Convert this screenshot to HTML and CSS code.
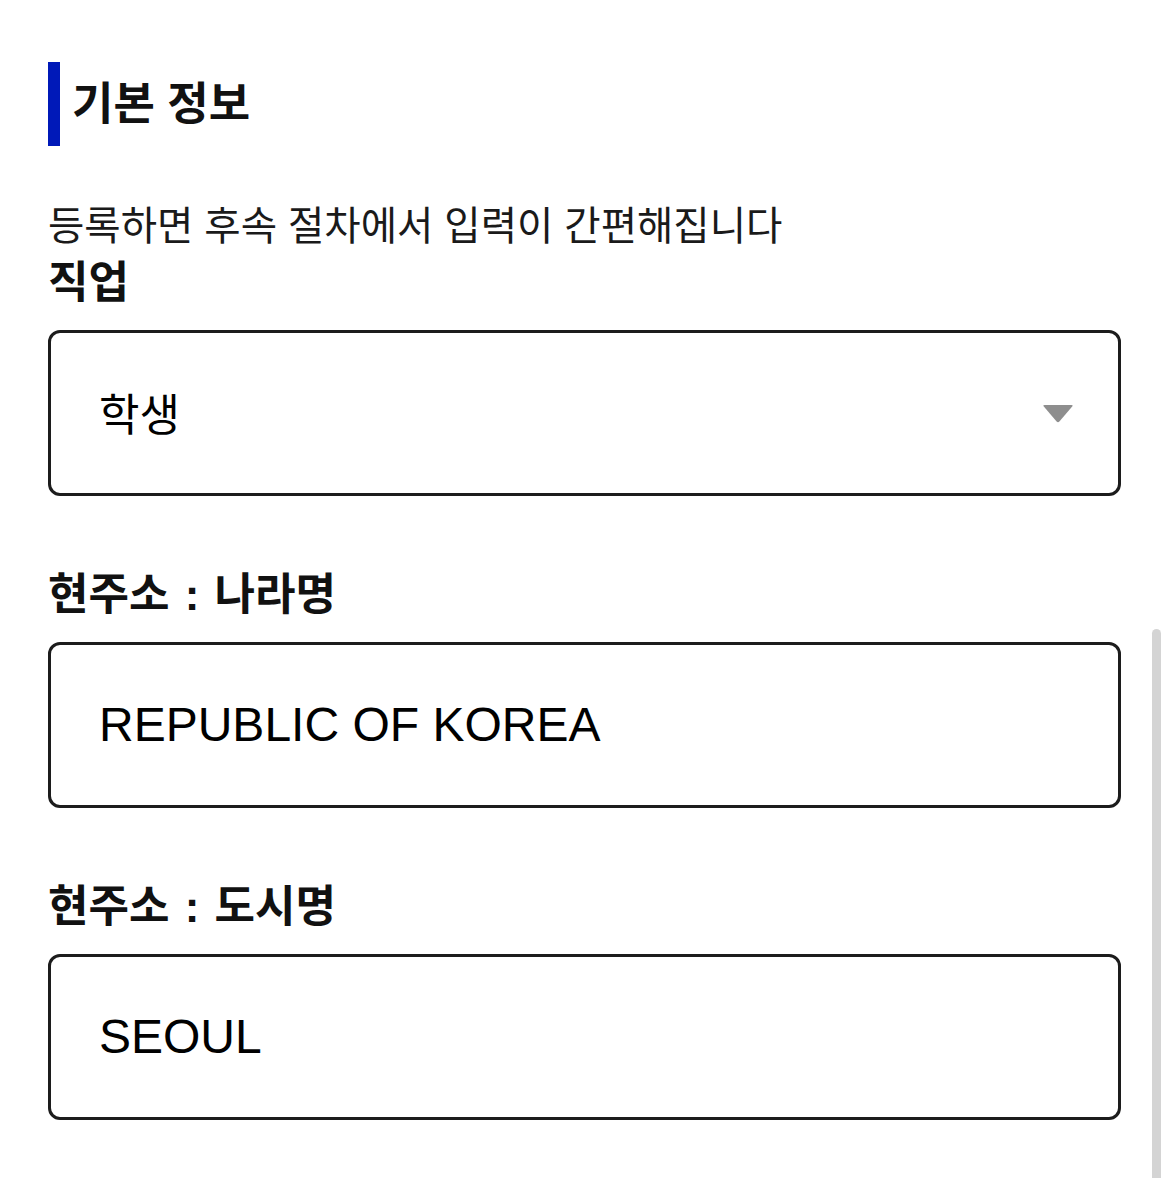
FILE: index.html
```html
<!DOCTYPE html>
<html lang="ko">
<head>
<meta charset="utf-8">
<title>기본 정보</title>
<link rel="stylesheet" href="styles.css">
</head>
<body>
<main class="page">
  <h2 class="section-title">기본 정보</h2>
  <p class="desc">등록하면 후속 절차에서 입력이 간편해집니다</p>
  <div class="field">
    <div class="label">직업</div>
    <div class="box select">
      <span class="value value-ko">학생</span>
      <svg class="caret" width="32" height="19" viewBox="0 0 32 19" aria-hidden="true">
        <path d="M2.5 1 L29.5 1 Q31.5 1 30.2 2.6 L17.4 17.4 Q16 19 14.6 17.4 L1.8 2.6 Q0.5 1 2.5 1 Z" fill="#8e8e8e"/>
      </svg>
    </div>
  </div>
  <div class="field">
    <div class="label">현주소 : 나라명</div>
    <div class="box"><span class="value">REPUBLIC OF KOREA</span></div>
  </div>
  <div class="field">
    <div class="label">현주소 : 도시명</div>
    <div class="box"><span class="value">SEOUL</span></div>
  </div>
</main>
<div class="scroll-thumb"></div>
</body>
</html>
```
FILE: styles.css
```css
html, body {
  margin: 0;
  padding: 0;
  background: #ffffff;
}
body {
  font-family: "Liberation Sans", "Noto Sans CJK KR", sans-serif;
  color: #111111;
  overflow: hidden;
  height: 1178px;
}
.page {
  padding: 62px 49px 0 48px;
  display: flex;
  flex-direction: column;
}
.section-title {
  margin: 0;
  height: 84px;
  line-height: 86px;
  border-left: 12px solid #0019b8;
  padding-left: 12px;
  font-size: 45px;
  font-weight: 700;
  color: #111111;
}
.desc {
  margin: 53px 0 0 0;
  font-size: 39.5px;
  line-height: 54px;
  font-weight: 400;
  color: #1a1a1a;
}
.field {
  display: flex;
  flex-direction: column;
  margin-top: 72px;
}
.desc + .field {
  margin-top: 3px;
}
.label {
  font-size: 44px;
  font-weight: 700;
  line-height: 54px;
  margin-bottom: 20px;
  word-spacing: 3px;
  color: #111111;
}
.box {
  box-sizing: border-box;
  height: 166px;
  border: 3px solid #1c1c1c;
  border-radius: 12px;
  padding: 0 44px 0 48px;
  display: flex;
  align-items: center;
}
.select {
  justify-content: space-between;
}
.value {
  font-size: 48px;
  line-height: 60px;
  color: #000000;
}
.value-ko {
  font-size: 44px;
  padding-top: 5px;
}
.caret {
  display: block;
}
.scroll-thumb {
  position: absolute;
  top: 629px;
  right: 9px;
  width: 9px;
  height: 560px;
  background: #d4d4d4;
  border-radius: 5px;
}
```
